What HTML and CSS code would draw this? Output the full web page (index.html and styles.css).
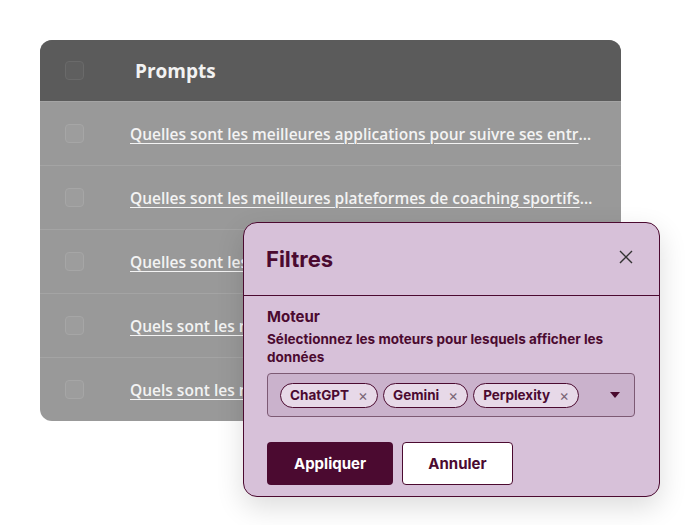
FILE: index.html
```html
<!DOCTYPE html>
<html lang="fr">
<head>
<meta charset="utf-8">
<title>Filtres</title>
<link rel="stylesheet" href="styles.css">
</head>
<body>
<div class="stage">
  <div class="table">
    <div class="thead">
      <span class="cb cb-head"></span>
      <span class="th">Prompts</span>
    </div>
    <div class="row"><span class="cb"></span><a class="link">Quelles sont les meilleures applications pour suivre ses entraînements</a></div>
    <div class="row"><span class="cb"></span><a class="link">Quelles sont les meilleures plateformes de coaching sportifs en ligne</a></div>
    <div class="row"><span class="cb"></span><a class="link">Quelles sont les meilleures montres connectées pour le sport</a></div>
    <div class="row"><span class="cb"></span><a class="link">Quels sont les meilleurs programmes de musculation à domicile</a></div>
    <div class="row"><span class="cb"></span><a class="link">Quels sont les meilleurs conseils pour débuter la course à pied</a></div>
  </div>

  <div class="modal">
    <div class="modal-head">
      <h2 class="title">Filtres</h2>
      <svg class="close" width="14" height="14" viewBox="0 0 14 14"><path d="M1 1L13 13M13 1L1 13" stroke="#333" stroke-width="1.4" fill="none"/></svg>
    </div>
    <div class="modal-body">
      <div class="label">Moteur</div>
      <div class="desc">Sélectionnez les moteurs pour lesquels afficher les données</div>
      <div class="select">
        <div class="chips">
          <span class="chip">ChatGPT <span class="x">×</span></span>
          <span class="chip">Gemini <span class="x">×</span></span>
          <span class="chip">Perplexity <span class="x">×</span></span>
        </div>
        <svg class="caret" width="10" height="6" viewBox="0 0 10 6"><path d="M0 0H10L5 6Z" fill="#4a0a2e"/></svg>
      </div>
      <div class="actions">
        <button class="btn btn-primary">Appliquer</button>
        <button class="btn btn-secondary">Annuler</button>
      </div>
    </div>
  </div>
</div>
</body>
</html>
```
FILE: styles.css
```css
* { box-sizing: border-box; }
html, body { margin: 0; padding: 0; background: #fff; }
body { width: 700px; height: 525px; overflow: hidden; font-family: "Open Sans", "Noto Sans", sans-serif; }
.stage { position: relative; padding: 40px 0 0 40px; }
.table {
  width: 581px;
  border-radius: 12px;
  overflow: hidden;
  background: #999999;
}
.thead {
  height: 61px;
  background: #5b5b5b;
  display: flex;
  align-items: center;
  padding-left: 25px;
}
.th {
  margin-left: 51px;
  color: #f2f2f2;
  font-family: "Open Sans", sans-serif;
  font-weight: 700;
  font-size: 19px;
}
.cb {
  flex: none;
  width: 19px;
  height: 19px;
  border-radius: 4px;
  border: 1px solid #a6a6a6;
  background: #9d9d9d;
}
.cb-head { border-color: #6a6a6a; background: #5f5f5f; }
.row {
  height: 64px;
  border-top: 1px solid #a4a4a4;
  display: flex;
  align-items: center;
  padding-left: 25px;
  padding-right: 26px;
}
.link {
  margin-left: 46px;
  color: #f3f3f3;
  font-family: "Open Sans", sans-serif;
  font-weight: 600;
  font-size: 15.5px;
  text-decoration: underline;
  text-underline-offset: 3px;
  text-decoration-thickness: 1px;
  white-space: nowrap;
  overflow: hidden;
  text-overflow: ellipsis;
  min-width: 0;
}
.modal {
  position: absolute;
  left: 243px;
  top: 222px;
  width: 417px;
  height: 275px;
  background: #d7c1d9;
  border: 1.5px solid #4b0a30;
  border-radius: 14px;
  box-shadow: 0 10px 28px rgba(0,0,0,0.14);
  font-family: "Inter", "Noto Sans", sans-serif;
  color: #4b0a30;
}
.modal-head {
  height: 73px;
  border-bottom: 1.5px solid #4b0a30;
  display: flex;
  align-items: center;
  justify-content: space-between;
  padding: 0 26px 0 22px;
}
.title { margin: 0; font-size: 22px; font-weight: 700; }
.close { margin-top: -4px; }
.modal-body { padding: 12px 24px 0 23px; }
.label { font-size: 15px; font-weight: 700; line-height: 18px; }
.desc { margin-top: 4px; font-size: 13.5px; font-weight: 700; line-height: 18px; }
.select {
  margin-top: 7px;
  height: 44px;
  border: 1px solid #7d5a74;
  border-radius: 4px;
  background: #cab2cc;
  display: flex;
  align-items: center;
  justify-content: space-between;
  padding: 0 14px 0 12px;
}
.chips { display: flex; gap: 5px; }
.chip {
  height: 25px;
  border: 1px solid #4b0a30;
  border-radius: 13px;
  background: #e7d9e8;
  display: inline-flex;
  align-items: center;
  padding: 0 9px 0 9px;
  font-size: 13.5px;
  font-weight: 700;
}
.chip .x { margin-left: 9px; font-weight: 400; color: #7a6676; font-size: 15px; }
.actions { display: flex; gap: 9px; margin-top: 25px; }
.btn {
  height: 43px;
  border-radius: 4px;
  font-family: "Inter", "Noto Sans", sans-serif;
  font-size: 15px;
  font-weight: 700;
}
.btn-primary { width: 126px; background: #4b0a30; color: #fff; border: none; }
.btn-secondary { width: 111px; background: #fff; color: #4b0a30; border: 1px solid #4b0a30; }
```
